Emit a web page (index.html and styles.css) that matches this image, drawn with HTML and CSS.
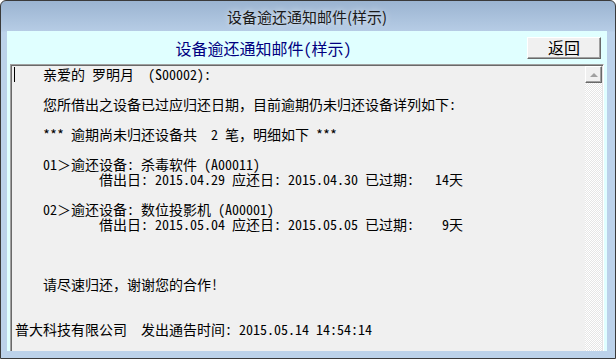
FILE: index.html
```html
<!DOCTYPE html>
<html lang="zh-CN">
<head>
    <meta charset="UTF-8">
    <title>设备逾还通知邮件(样示)</title>
    <link rel="stylesheet" href="styles.css">
</head>
<body>
    <div class="window">
        <div class="titlebar">设备逾还通知邮件(样示)</div>
        <div class="client">
            <div class="head">
                <div class="heading">设备逾还通知邮件(样示)</div>
                <button class="btn">返回</button>
            </div>
            <div class="memo">
<pre class="memo-text"><span class="caret"></span>    亲爱的 罗明月  (S00002):

    您所借出之设备已过应归还日期，目前逾期仍未归还设备详列如下:

    *** 逾期尚未归还设备共  2 笔，明细如下 ***

    01＞逾还设备: 杀毒软件 (A00011)
            借出日: 2015.04.29 应还日: 2015.04.30 已过期:   14天

    02＞逾还设备: 数位投影机 (A00001)
            借出日: 2015.05.04 应还日: 2015.05.05 已过期:    9天



    请尽速归还，谢谢您的合作!


普大科技有限公司  发出通告时间: 2015.05.14 14:54:14</pre>
                <div class="scrollbar">
                    <div class="scroll-up"><span class="arrow"></span></div>
                </div>
            </div>
        </div>
    </div>
</body>
</html>
```

FILE: styles.css
```css
body {
    margin: 0;
    background: #ffffff;
    font-family: "Noto Sans CJK SC", sans-serif;
}
.window {
    width: 616px;
    height: 359px;
    box-sizing: border-box;
    border: 1px solid #3a3a3a;
    border-radius: 6px 6px 0 0;
    background: linear-gradient(#9bb4d1 0, #b6cce5 30px, #bcd2ea 31px);
    padding: 0 8px 7px 6px;
    display: flex;
    flex-direction: column;
}
.titlebar {
    height: 30px;
    flex: none;
    display: flex;
    align-items: center;
    justify-content: center;
    padding-top: 1px;
    box-sizing: border-box;
    font-size: 15px;
    line-height: 20px;
    color: #1a1a1a;
    text-shadow: 0 0 6px rgba(255, 255, 255, 0.8);
}
.client {
    flex: 1;
    background: #e0ffff;
    overflow: hidden;
    display: flex;
    flex-direction: column;
}
.head {
    display: flex;
    align-items: center;
    gap: 7px;
    padding: 6px 6px 0 0;
    height: 22px;
    flex: none;
}
.heading {
    flex: 1;
    text-align: center;
    font-family: "Noto Sans Mono CJK SC", "Noto Sans CJK SC", monospace;
    font-size: 16px;
    line-height: 20px;
    color: #000080;
}
.btn {
    width: 74px;
    height: 22px;
    box-sizing: border-box;
    padding: 0 0 2px 0;
    background: #f0f0f0;
    border: 1px solid;
    border-color: #ffffff #696969 #696969 #ffffff;
    box-shadow: inset -1px -1px 0 #a0a0a0;
    font-family: "Noto Sans Mono CJK SC", "Noto Sans CJK SC", monospace;
    font-size: 16px;
    line-height: 16px;
    color: #000000;
}
.memo {
    margin: 5px 3px 0 3px;
    height: 300px;
    flex: none;
    display: flex;
    background: #f0f0f0;
    border: 1px solid;
    border-color: #a0a0a0 #ffffff #ffffff #a0a0a0;
    box-shadow: inset 1px 1px 0 #696969, inset -1px -1px 0 #e3e3e3;
    padding: 1px 1px 0 1px;
}
.memo-text {
    flex: 1;
    margin: 0;
    padding: 1px 0 0 3px;
    font-family: "Noto Sans Mono CJK SC", "Noto Sans CJK SC", monospace;
    font-size: 14px;
    line-height: 15px;
    color: #000000;
}
.caret {
    display: inline-block;
    width: 0;
    height: 15px;
    margin-left: -1px;
    border-left: 1px solid #000000;
    vertical-align: top;
}
.scrollbar {
    width: 17px;
    flex: none;
    background: repeating-conic-gradient(#ffffff 0 25%, #e6e6e6 0 50%) 0 0 / 2px 2px;
}
.scroll-up {
    height: 17px;
    box-sizing: border-box;
    background: #f0f0f0;
    border: 1px solid;
    border-color: #ffffff #696969 #696969 #ffffff;
    box-shadow: inset -1px -1px 0 #a0a0a0;
    display: flex;
    align-items: center;
    justify-content: center;
}
.arrow {
    width: 0;
    height: 0;
    border-left: 4px solid transparent;
    border-right: 4px solid transparent;
    border-bottom: 4px solid #a0a0a0;
}
```
